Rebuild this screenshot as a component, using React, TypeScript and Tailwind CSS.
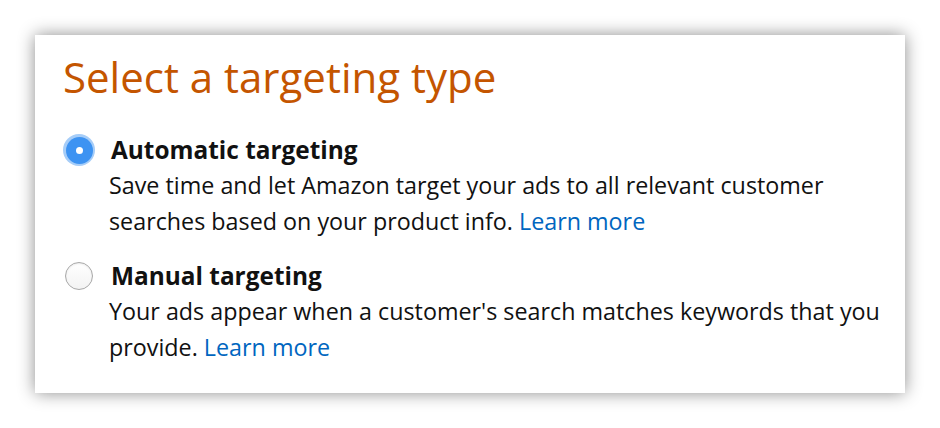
import React from "react";

type Option = {
  id: string;
  label: string;
  lines: string[];
  checked: boolean;
};

const options: Option[] = [
  {
    id: "auto",
    label: "Automatic targeting",
    lines: ["Save time and let Amazon target your ads to all relevant customer", "searches based on your product info."],
    checked: true,
  },
  {
    id: "manual",
    label: "Manual targeting",
    lines: ["Your ads appear when a customer's search matches keywords that you", "provide."],
    checked: false,
  },
];

function Radio({ checked }: { checked: boolean }) {
  if (checked) {
    return (
      <span className="flex h-[32px] w-[32px] items-center justify-center rounded-full bg-[#a6cdf8]">
        <span className="flex h-[27px] w-[27px] items-center justify-center rounded-full bg-[#3d93f2]">
          <span className="h-[7px] w-[7px] rounded-full bg-white" />
        </span>
      </span>
    );
  }
  return (
    <span className="flex h-[32px] w-[32px] items-center justify-center">
      <span className="h-[28px] w-[28px] rounded-full border border-[#a8a8a8] bg-gradient-to-b from-white to-[#f3f3f3] shadow-[inset_0_1px_2px_rgba(0,0,0,0.08)]" />
    </span>
  );
}

export default function App() {
  return (
    <main
      className="h-[428px] w-[940px] bg-white pl-[35px] pt-[35px] text-[#111]"
      style={{ fontFamily: '"Open Sans", "Noto Sans", sans-serif' }}
    >
      <section className="h-[358px] w-[870px] bg-white pl-[28px] pt-[12px] shadow-[0_0_16px_rgba(0,0,0,0.45)]">
        <h1 className="text-[42px] leading-[60px] text-[#c45500]">Select a targeting type</h1>
        <div className="mt-[26px] grid gap-[20px]">
          {options.map((o) => (
            <label key={o.id} className="flex items-start gap-[14px]">
              <span className="pt-[1px]">
                <Radio checked={o.checked} />
              </span>
              <span className="block">
                <span className="block pl-[2px] text-[24.4px] font-bold leading-[34px]">{o.label}</span>
                <span className="block whitespace-nowrap text-[23.3px] leading-[36px]">
                  {o.lines[0]}
                  <br />
                  {o.lines[1]} <a className="text-[#0066c0]">Learn more</a>
                </span>
              </span>
            </label>
          ))}
        </div>
      </section>
    </main>
  );
}
